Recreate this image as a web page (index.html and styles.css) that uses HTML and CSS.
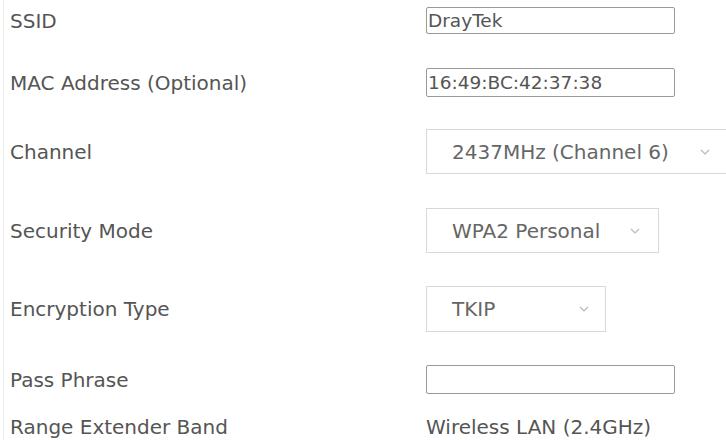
FILE: index.html
```html
<!DOCTYPE html>
<html lang="en">
<head>
  <meta charset="UTF-8" />
  <title>Range Extender</title>
  <link rel="stylesheet" href="styles.css">
</head>
<body>
  <div class="panel">
    <div class="row row-ssid">
      <div class="label">SSID</div>
      <input class="text-input" type="text" value="DrayTek">
    </div>

    <div class="row row-mac">
      <div class="label">MAC Address (Optional)</div>
      <input class="text-input" type="text" value="16:49:BC:42:37:38">
    </div>

    <div class="row row-channel">
      <div class="label">Channel</div>
      <div class="select select-channel">
        <span>2437MHz (Channel 6)</span>
        <svg class="chevron" viewBox="0 0 10 6"><path d="M1 1l4 4 4-4" /></svg>
      </div>
    </div>

    <div class="row row-security">
      <div class="label">Security Mode</div>
      <div class="select select-security">
        <span>WPA2 Personal</span>
        <svg class="chevron" viewBox="0 0 10 6"><path d="M1 1l4 4 4-4" /></svg>
      </div>
    </div>

    <div class="row row-encryption">
      <div class="label">Encryption Type</div>
      <div class="select select-encryption">
        <span>TKIP</span>
        <svg class="chevron" viewBox="0 0 10 6"><path d="M1 1l4 4 4-4" /></svg>
      </div>
    </div>

    <div class="row row-pass">
      <div class="label">Pass Phrase</div>
      <input class="text-input" type="password" value="">
    </div>

    <div class="row row-band">
      <div class="label">Range Extender Band</div>
      <div class="value">Wireless LAN (2.4GHz)</div>
    </div>
  </div>
</body>
</html>
```

FILE: styles.css
```css
* {
  margin: 0;
  padding: 0;
  box-sizing: border-box;
}

body {
  font-family: 'DejaVu Sans', Verdana, sans-serif;
  background: #ffffff;
  color: #555555;
  overflow: hidden;
}

.panel {
  margin-left: 3px;
  border-left: 1px solid #ececec;
  padding: 7px 0 0 6px;
  height: 440px;
  width: 723px;
  overflow: hidden;
}

.row {
  display: flex;
  align-items: center;
}

.label {
  flex-shrink: 0;
  width: 416px;
  font-size: 20px;
  color: #555555;
}

.row-ssid { height: 27px; margin-bottom: 34px; }
.row-mac { height: 29px; margin-bottom: 32px; }
.row-channel { height: 45px; margin-bottom: 34px; }
.row-security { height: 45px; margin-bottom: 33px; }
.row-encryption { height: 46px; margin-bottom: 33px; }
.row-pass { height: 29px; margin-bottom: 23px; }
.row-band { height: 20px; }

.text-input {
  flex-shrink: 0;
  width: 249px;
  height: 100%;
  border: 1px solid #9a9a9a;
  border-radius: 2px;
  padding: 0 1px;
  font-family: inherit;
  font-size: 18.5px;
  color: #555555;
  background: #ffffff;
  outline: none;
}

.select {
  flex-shrink: 0;
  height: 100%;
  display: flex;
  align-items: center;
  justify-content: space-between;
  border: 1px solid #d8d8d8;
  padding: 0 16px 0 25px;
  font-size: 20px;
  color: #666666;
  background: #ffffff;
}

.select-channel { width: 310px; padding-right: 25px; }
.select-security { width: 233px; padding-right: 18px; }
.select-encryption { width: 180px; padding-right: 16px; }

.chevron {
  width: 10px;
  height: 6px;
  fill: none;
  stroke: #b8b8b8;
  stroke-width: 1.2;
}

.value {
  font-size: 20px;
  color: #555555;
}
```
